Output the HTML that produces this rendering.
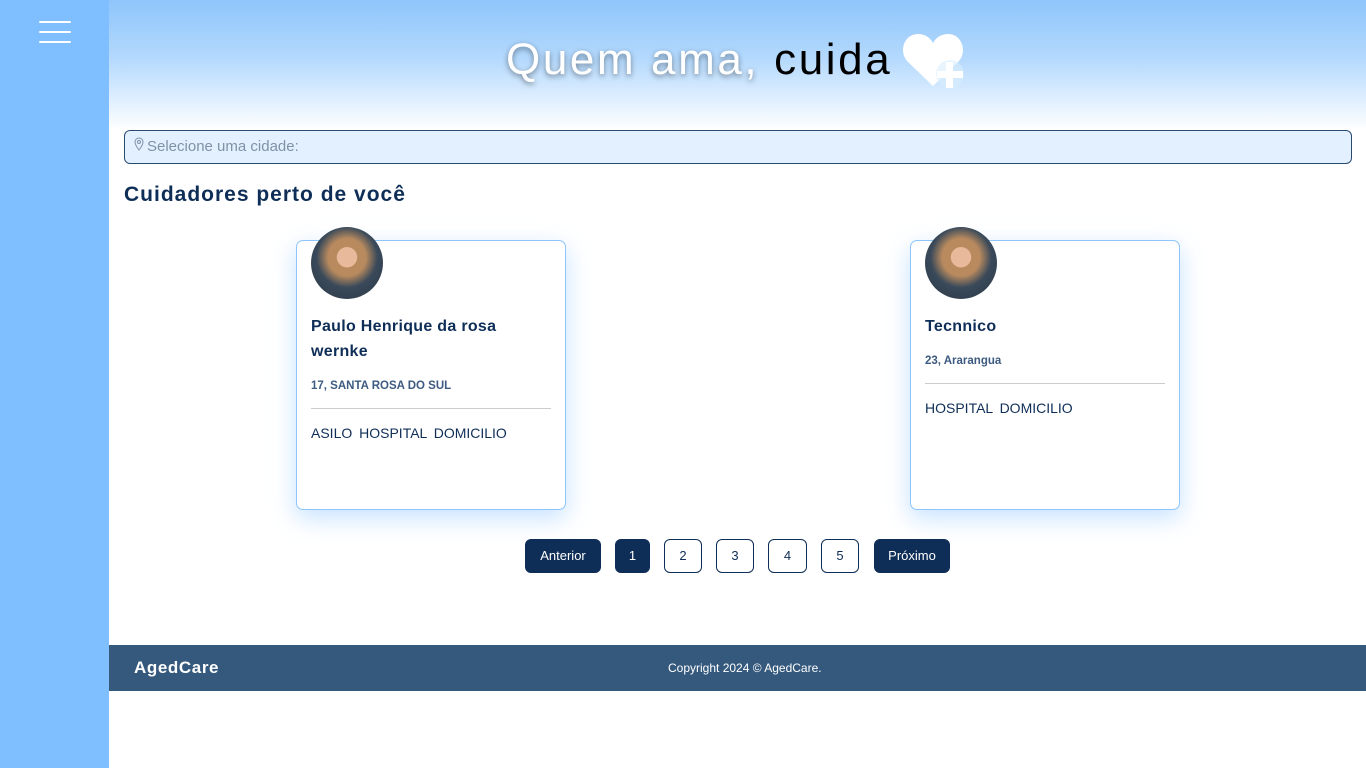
<!DOCTYPE html>
<html><head><meta charset="utf-8"><style>
*{box-sizing:border-box;margin:0;padding:0}
body{width:1366px;height:768px;overflow:hidden;background:#fff;font-family:"Liberation Sans",sans-serif;position:relative}
.side{position:absolute;left:0;top:0;width:109px;height:768px;background:#80bfff}
.hb{position:absolute;left:39px;width:32px;height:2px;background:#fff;border-radius:1px}
.hdr{position:absolute;left:109px;top:0;width:1257px;height:130px;background:linear-gradient(#8ec5fb,#b4d9fd 45%,#fff 100%)}
.title{position:absolute;left:506px;top:32px;font-size:44px;line-height:56px;letter-spacing:2.6px;white-space:nowrap}
.title .w{color:#fff;text-shadow:0 2px 6px rgba(0,0,0,.45)}
.inp{position:absolute;left:124px;top:130px;width:1228px;height:34px;background:#e3f0ff;border:1px solid #2b4a6f;border-radius:6px;color:#7f92a8;font-size:15px;line-height:32px;padding-left:22px}
h2{position:absolute;left:124px;top:183px;font-size:21px;color:#0f2e57;font-weight:bold;letter-spacing:1px}
.card{position:absolute;top:240px;width:270px;height:270px;border:1px solid #8ec5fb;border-radius:7px;background:#fff;box-shadow:0 8px 24px rgba(128,191,255,.45);padding:0 14px}
.av{position:absolute;left:14px;top:-14px;width:72px;height:72px;border-radius:50%;background:radial-gradient(circle at 50% 42%,#e8b99a 0 18%,#b98a5e 19% 34%,#3a4a5a 55%,#2a3544 100%);overflow:hidden}
.name{margin-top:73px;font-weight:bold;font-size:16px;line-height:25px;color:#0f2e57;letter-spacing:.3px}
.loc{margin-top:16px;font-size:11.5px;font-weight:bold;color:#3d5a80}
.hr{height:1px;background:#ccc;margin-top:16px}
.tags{margin-top:16px;font-size:14px;color:#0f2e57;word-spacing:3px}
.pg{position:absolute;top:539px;height:34px;border-radius:6px;font-size:13px;line-height:32px;text-align:center;border:1px solid #0f2e57}
.d{background:#0f2e57;color:#fff}
.l{background:#fff;color:#0f2e57}
.ft{position:absolute;left:109px;top:645px;width:1257px;height:46px;background:#34597d;color:#fff}
</style></head><body>
<div class="side"><div class="hb" style="top:21px"></div><div class="hb" style="top:31px"></div><div class="hb" style="top:41px"></div></div>
<div class="hdr"></div>
<div class="title"><span class="w">Quem ama,</span> <span style="color:#000">cuida</span></div>
<svg style="position:absolute;left:902px;top:30px" width="64" height="60" viewBox="0 0 64 60"><path d="M31 56 L6 32 C-4 22 2 4 16 4 C24 4 29 9 31 13 C33 9 38 4 46 4 C60 4 66 22 56 32 Z" fill="#fff"/><circle cx="48" cy="44" r="14" fill="#d9ecfd" opacity=".6"/><rect x="44" y="32" width="7" height="26" fill="#fff"/><rect x="35" y="41" width="26" height="7" fill="#fff"/></svg>
<div class="inp"><svg style="position:absolute;left:9px;top:6px" width="10" height="14" viewBox="0 0 10 14"><path d="M5 13 C2 9 1 7 1 5 A4 4 0 0 1 9 5 C9 7 8 9 5 13Z" fill="none" stroke="#7f92a8"/><circle cx="5" cy="5" r="1.5" fill="none" stroke="#7f92a8"/></svg>Selecione uma cidade:</div>
<h2>Cuidadores perto de você</h2>
<div class="card" style="left:296px"><div class="av"></div><div class="name">Paulo Henrique da rosa wernke</div><div class="loc">17, SANTA ROSA DO SUL</div><div class="hr"></div><div class="tags">ASILO HOSPITAL DOMICILIO</div></div>
<div class="card" style="left:910px"><div class="av"></div><div class="name">Tecnnico</div><div class="loc">23, Ararangua</div><div class="hr"></div><div class="tags">HOSPITAL DOMICILIO</div></div>
<div class="pg d" style="left:525px;width:76px">Anterior</div>
<div class="pg d" style="left:615px;width:35px">1</div>
<div class="pg l" style="left:664px;width:38px">2</div>
<div class="pg l" style="left:716px;width:38px">3</div>
<div class="pg l" style="left:768px;width:39px">4</div>
<div class="pg l" style="left:821px;width:38px">5</div>
<div class="pg d" style="left:874px;width:76px">Próximo</div>
<div class="ft"><span style="position:absolute;left:25px;top:13px;font-size:17px;font-weight:bold;letter-spacing:.6px">AgedCare</span><span style="position:absolute;left:559px;top:16px;font-size:12px">Copyright 2024 © AgedCare.</span></div>
</body></html>
